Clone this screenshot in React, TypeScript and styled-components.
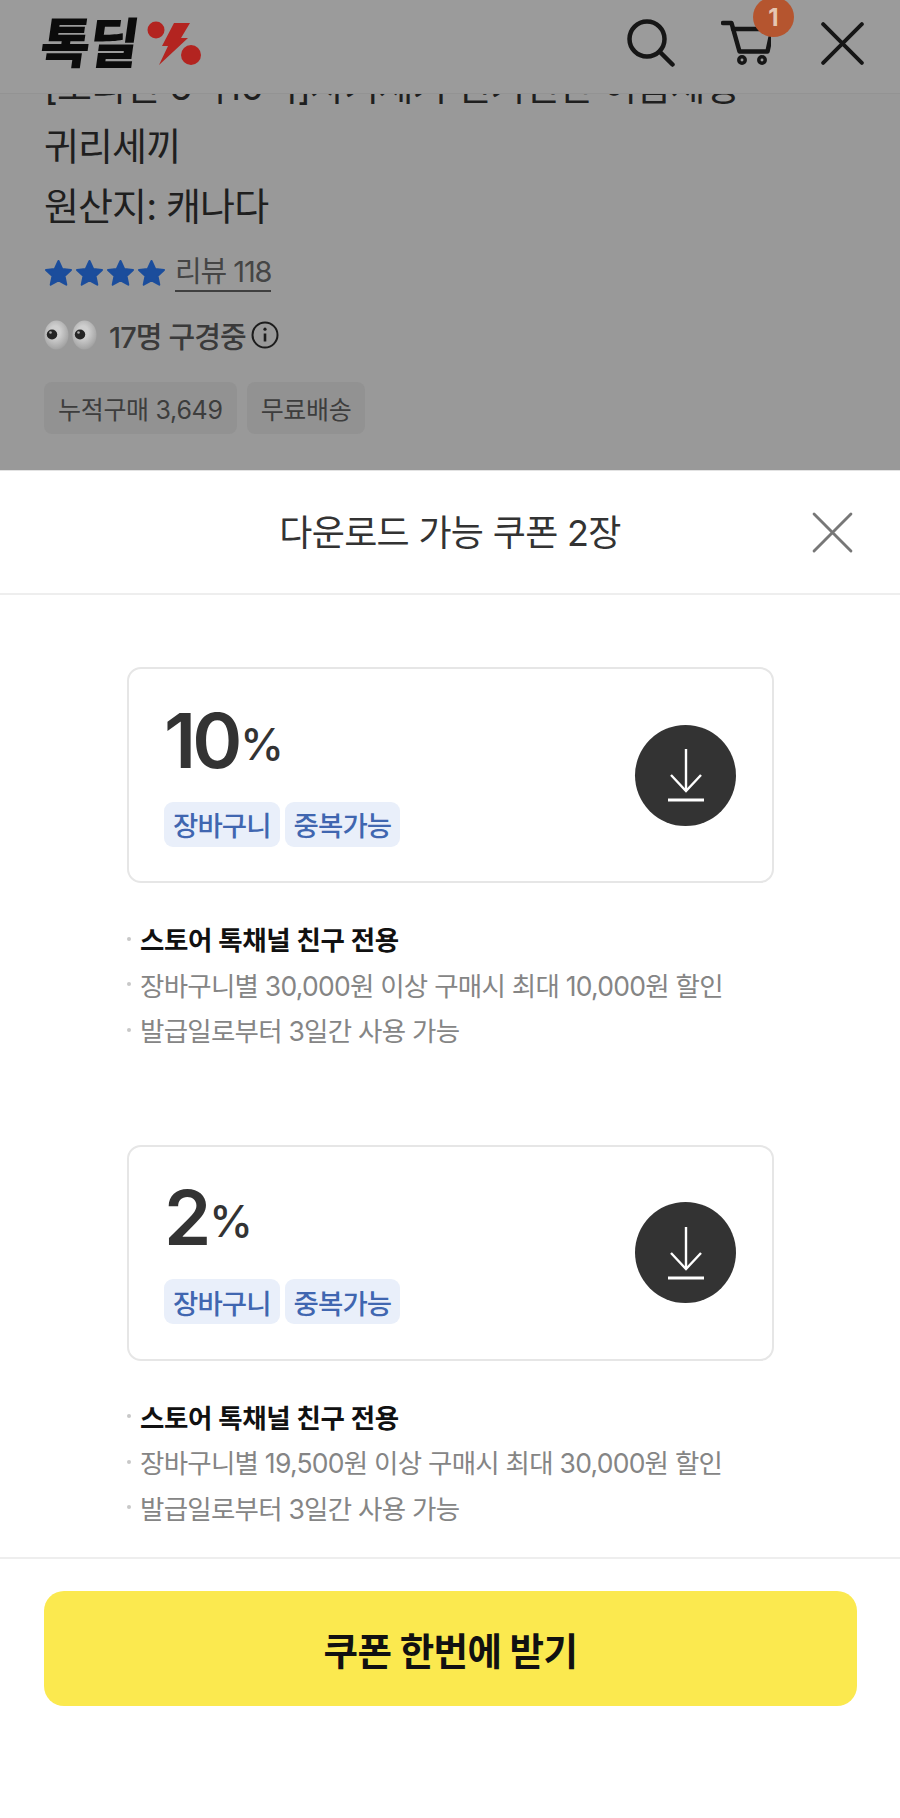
import React from 'react';
import styled, { createGlobalStyle } from 'styled-components';

const GlobalStyle = createGlobalStyle`
  html, body {
    margin: 0;
    padding: 0;
    background: #fff;
  }
  body {
    font-family: Inter, "Noto Sans CJK KR", sans-serif;
  }
`;

const Screen = styled.div`
  width: 900px;
  height: 1818px;
  display: flex;
  flex-direction: column;
  overflow: hidden;
`;

// dimmed product page behind the sheet
const Dimmed = styled.section`
  position: relative;
  height: 470px;
  flex: none;
  overflow: hidden;
  background: #999;
  padding: 56px 44px 0;
  box-sizing: border-box;
`;

const TopBar = styled.header`
  position: absolute;
  top: 0;
  left: 0;
  right: 0;
  height: 94px;
  box-sizing: border-box;
  padding: 0 36px 0 41px;
  display: flex;
  align-items: center;
  justify-content: space-between;
  background: #9b9b9b;
  border-bottom: 1px solid #939393;
`;

const Logo = styled.div`
  display: flex;
  align-items: center;
  gap: 10px;
  margin-top: -6px;
`;

const LogoText = styled.span`
  font-size: 54px;
  line-height: 1;
  font-weight: 900;
  letter-spacing: -1.5px;
  color: #0b0b0b;
  transform: skewX(-8deg);
`;

const TopIcons = styled.div`
  display: flex;
  align-items: center;
  gap: 44px;
  margin-top: -7px;
`;

const CartWrap = styled.div`
  position: relative;
  display: flex;
  margin-right: 6px;
`;

const CartBadge = styled.span`
  position: absolute;
  top: -23px;
  left: 32px;
  width: 41px;
  height: 40px;
  border-radius: 50%;
  background: #b5552f;
  color: #e6c6b2;
  font-size: 24px;
  font-weight: 700;
  display: flex;
  align-items: center;
  justify-content: center;
`;

const ProductName = styled.div`
  font-size: 38px;
  line-height: 60px;
  letter-spacing: -0.9px;
  color: #1f1f1f;
  white-space: nowrap;
`;

const ReviewRow = styled.div`
  display: flex;
  align-items: center;
  gap: 9px;
  margin-top: 18px;
  height: 38px;
`;

const Stars = styled.div`
  display: flex;
  gap: 2px;
`;

const ReviewLink = styled.span`
  font-size: 29px;
  line-height: 36px;
  letter-spacing: -1.1px;
  color: #454545;
  border-bottom: 2px solid #3f3f3f;
`;

const WatchRow = styled.div`
  display: flex;
  align-items: center;
  margin-top: 26px;
  height: 34px;
`;

const Eyes = styled.div`
  display: flex;
  gap: 3px;
  margin-right: 12px;
`;

const WatchText = styled.span`
  font-size: 29px;
  font-weight: 500;
  letter-spacing: -0.9px;
  color: #3a3a3a;
  margin-right: 5px;
`;

const ChipRow = styled.div`
  display: flex;
  gap: 10px;
  margin-top: 30px;
`;

const Chip = styled.span`
  height: 52px;
  padding: 0 14px;
  border-radius: 8px;
  background: #929292;
  color: #3d3d3d;
  font-size: 25px;
  letter-spacing: -0.3px;
  display: flex;
  align-items: center;
`;

// coupon bottom sheet
const Sheet = styled.section`
  flex: 1;
  display: flex;
  flex-direction: column;
  background: #fff;
  border-top: 1px solid #e2e2e2;
`;

const SheetHeader = styled.div`
  position: relative;
  height: 122px;
  flex: none;
  display: flex;
  align-items: center;
  justify-content: center;
  border-bottom: 2px solid #eeeeee;
`;

const SheetTitle = styled.h2`
  margin: 0 0 4px;
  font-size: 36px;
  font-weight: 400;
  letter-spacing: -0.7px;
  color: #333;
`;

const SheetClose = styled.button`
  position: absolute;
  top: 41px;
  right: 47px;
  padding: 0;
  border: none;
  background: none;
  display: flex;
`;

const CouponList = styled.div`
  flex: 1;
  display: flex;
  flex-direction: column;
  gap: 92px;
  padding: 72px 126px 0 127px;
`;

const Coupon = styled.article`
  display: flex;
  flex-direction: column;
`;

const CouponCard = styled.div`
  height: 216px;
  box-sizing: border-box;
  border: 2px solid #e6e6e6;
  border-radius: 14px;
  padding: 0 36px 0 35px;
  display: flex;
  align-items: center;
  justify-content: space-between;
`;

const CouponInfo = styled.div`
  display: flex;
  flex-direction: column;
  gap: 22px;
  margin-top: -4px;
`;

const Discount = styled.div`
  display: flex;
  align-items: flex-end;
  color: #333;
  height: 80px;
`;

const DiscountValue = styled.span`
  font-size: 76px;
  line-height: 80px;
  font-weight: 600;
  letter-spacing: -4px;
`;

const DiscountUnit = styled.span`
  font-size: 44px;
  line-height: 44px;
  font-weight: 500;
  margin-left: 2px;
  padding-bottom: 14px;
  letter-spacing: -1px;
`;

const Tags = styled.div`
  display: flex;
  gap: 5px;
`;

const Tag = styled.span`
  height: 45px;
  padding: 0 9px;
  border-radius: 9px;
  background: #e9effa;
  color: #4066b0;
  font-size: 27.5px;
  font-weight: 500;
  letter-spacing: -0.9px;
  display: flex;
  align-items: center;
`;

const DownloadButton = styled.button`
  width: 101px;
  height: 101px;
  padding: 0;
  border: none;
  border-radius: 50%;
  background: #333;
  display: flex;
  align-items: center;
  justify-content: center;
`;

const Notes = styled.ul`
  list-style: none;
  margin: 33px 0 0;
  padding: 0;
`;

const Note = styled.li<{ $strong?: boolean }>`
  display: flex;
  align-items: center;
  gap: 9px;
  height: 45.5px;
  font-size: 26.5px;
  white-space: nowrap;
  letter-spacing: ${({ $strong }) => ($strong ? '-0.4px' : '-0.75px')};
  font-weight: ${({ $strong }) => ($strong ? 600 : 400)};
  color: ${({ $strong }) => ($strong ? '#111' : '#858585')};

  &::before {
    content: '';
    width: 4px;
    height: 4px;
    border-radius: 50%;
    background: #c8c8c8;
    flex: none;
  }
`;

const SheetFooter = styled.div`
  height: 261px;
  flex: none;
  box-sizing: border-box;
  padding: 32px 43px 0 44px;
  border-top: 2px solid #eeeeee;
`;

const ClaimButton = styled.button`
  width: 100%;
  height: 115px;
  border: none;
  border-radius: 20px;
  background: #fbe94f;
  color: #111;
  font-family: inherit;
  font-size: 37.5px;
  font-weight: 700;
  letter-spacing: -0.6px;
`;

const PercentMark = () => (
  <svg width="55" height="47" viewBox="0 0 55 47">
    <circle cx="9" cy="10" r="8.5" fill="#b32420" />
    <circle cx="44" cy="35" r="10" fill="#b32420" />
    <path d="M27 3h16l-9 15h7L12 45l9-19h-6z" fill="#b32420" />
  </svg>
);

const SearchIcon = () => (
  <svg width="50" height="48" viewBox="0 0 50 48" fill="none" stroke="#161616" strokeWidth="4.5" strokeLinecap="round">
    <circle cx="20" cy="20" r="17.5" />
    <path d="M33 33l12.5 12.5" />
  </svg>
);

const CartIcon = () => (
  <svg width="50" height="46" viewBox="0 0 50 46" fill="none" stroke="#161616" strokeWidth="4.5" strokeLinecap="round" strokeLinejoin="round">
    <path d="M2 3h8.5l8 28.5h28l3-14" />
    <path d="M12 9h26" />
    <circle cx="21" cy="40" r="3.2" strokeWidth="3.5" />
    <circle cx="41" cy="40" r="3.2" strokeWidth="3.5" />
  </svg>
);

const CrossIcon = ({ size, color, width }: { size: number; color: string; width: number }) => (
  <svg width={size} height={size} viewBox="0 0 40 40" fill="none" stroke={color} strokeWidth={width} strokeLinecap="round">
    <path d="M2 2l36 36M38 2L2 38" />
  </svg>
);

const StarIcon = () => (
  <svg width="29" height="28" viewBox="0 0 29 28">
    <path
      d="M14.5 2l3.7 8 8.8 1-6.5 6 1.8 8.7-7.8-4.4-7.8 4.4 1.8-8.7-6.5-6 8.8-1z"
      fill="#1b4d9c"
      stroke="#1b4d9c"
      strokeWidth="2"
      strokeLinejoin="round"
    />
  </svg>
);

const EyeIcon = ({ id }: { id: string }) => (
  <svg width="25" height="30" viewBox="0 0 25 30">
    <defs>
      <radialGradient id={id} cx="0.45" cy="0.4" r="0.7">
        <stop offset="0.3" stopColor="#cfcfcf" />
        <stop offset="1" stopColor="#979797" />
      </radialGradient>
    </defs>
    <ellipse cx="12.5" cy="15" rx="12" ry="14.5" fill={`url(#${id})`} />
    <ellipse cx="8" cy="14.5" rx="5.2" ry="5" fill="#252525" />
    <circle cx="6.5" cy="12.5" r="1.3" fill="#aaa" />
  </svg>
);

const InfoIcon = () => (
  <svg width="28" height="28" viewBox="0 0 28 28" fill="none" stroke="#1c1c1c" strokeWidth="2">
    <circle cx="14" cy="14" r="12.5" />
    <path d="M14 12.5v8" strokeWidth="2.6" />
    <circle cx="14" cy="8.2" r="1.6" fill="#1c1c1c" stroke="none" />
  </svg>
);

const DownloadIcon = () => (
  <svg width="40" height="56" viewBox="0 0 40 56" fill="none" stroke="#fff" strokeWidth="2.4">
    <path d="M20 2v42" />
    <path d="M5 28l15 16 15-16" />
    <path d="M2 53h36" strokeWidth="3" />
  </svg>
);

type CouponData = {
  value: string;
  minimum: string;
  maximum: string;
};

const coupons: CouponData[] = [
  { value: '10', minimum: '30,000원', maximum: '10,000원' },
  { value: '2', minimum: '19,500원', maximum: '30,000원' },
];

const App: React.FC = () => {
  return (
    <Screen>
      <GlobalStyle />
      <Dimmed>
        <ProductName>[오리진 6억10억]사기세기 친기진단 이름체형</ProductName>
        <ProductName>귀리세끼</ProductName>
        <ProductName>원산지: 캐나다</ProductName>
        <ReviewRow>
          <Stars>
            <StarIcon />
            <StarIcon />
            <StarIcon />
            <StarIcon />
          </Stars>
          <ReviewLink>리뷰 118</ReviewLink>
        </ReviewRow>
        <WatchRow>
          <Eyes>
            <EyeIcon id="eye-left" />
            <EyeIcon id="eye-right" />
          </Eyes>
          <WatchText>17명 구경중</WatchText>
          <InfoIcon />
        </WatchRow>
        <ChipRow>
          <Chip>누적구매 3,649</Chip>
          <Chip>무료배송</Chip>
        </ChipRow>

        <TopBar>
          <Logo>
            <LogoText>톡딜</LogoText>
            <PercentMark />
          </Logo>
          <TopIcons>
            <SearchIcon />
            <CartWrap>
              <CartIcon />
              <CartBadge>1</CartBadge>
            </CartWrap>
            <CrossIcon size={43} color="#161616" width={3.6} />
          </TopIcons>
        </TopBar>
      </Dimmed>

      <Sheet>
        <SheetHeader>
          <SheetTitle>다운로드 가능 쿠폰 2장</SheetTitle>
          <SheetClose aria-label="닫기">
            <CrossIcon size={41} color="#777" width={2.8} />
          </SheetClose>
        </SheetHeader>

        <CouponList>
          {coupons.map((coupon) => (
            <Coupon key={coupon.value}>
              <CouponCard>
                <CouponInfo>
                  <Discount>
                    <DiscountValue>{coupon.value}</DiscountValue>
                    <DiscountUnit>%</DiscountUnit>
                  </Discount>
                  <Tags>
                    <Tag>장바구니</Tag>
                    <Tag>중복가능</Tag>
                  </Tags>
                </CouponInfo>
                <DownloadButton aria-label="쿠폰 받기">
                  <DownloadIcon />
                </DownloadButton>
              </CouponCard>
              <Notes>
                <Note $strong>스토어 톡채널 친구 전용</Note>
                <Note>
                  장바구니별 {coupon.minimum} 이상 구매시 최대 {coupon.maximum} 할인
                </Note>
                <Note>발급일로부터 3일간 사용 가능</Note>
              </Notes>
            </Coupon>
          ))}
        </CouponList>

        <SheetFooter>
          <ClaimButton>쿠폰 한번에 받기</ClaimButton>
        </SheetFooter>
      </Sheet>
    </Screen>
  );
};

export default App;
